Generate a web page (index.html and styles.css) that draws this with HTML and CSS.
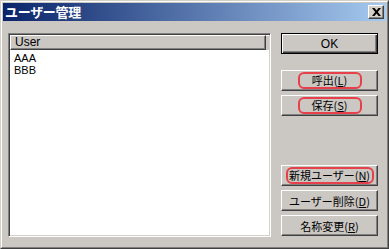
FILE: index.html
```html
<!DOCTYPE html>
<html lang="ja">
<head>
    <meta charset="UTF-8" />
    <title>ユーザー管理</title>
    <link rel="stylesheet" href="styles.css">
</head>
<body>
    <div class="window">
        <div class="frame">
            <div class="titlebar">
                <span class="title">ユーザー管理</span>
                <span class="close-btn">
                    <svg width="9" height="8" viewBox="0 0 9 8">
                        <path d="M0 0h2.5l2 2.5 2-2.5h2.5l-3.2 4 3.2 4h-2.5l-2-2.5-2 2.5h-2.5l3.2-4z" fill="#000"/>
                    </svg>
                </span>
            </div>

            <div class="content">
                <!-- ユーザー一覧 -->
                <div class="listbox">
                    <div class="list-header">
                        <div class="col">User</div>
                        <div class="col-rest"></div>
                    </div>
                    <div class="list-items">
                        <div class="item">AAA</div>
                        <div class="item">BBB</div>
                    </div>
                </div>

                <!-- ボタン -->
                <div class="buttons">
                    <div class="btn default">OK</div>
                    <div class="group top-group">
                        <div class="btn"><span class="mark">呼出(<u>L</u>)</span></div>
                        <div class="btn"><span class="mark">保存(<u>S</u>)</span></div>
                    </div>
                    <div class="group bottom-group">
                        <div class="btn"><span class="mark wide">新規ユーザー(<u>N</u>)</span></div>
                        <div class="btn">ユーザー削除(<u>D</u>)</div>
                        <div class="btn">名称変更(<u>R</u>)</div>
                    </div>
                </div>
            </div>
        </div>
    </div>
</body>
</html>
```

FILE: styles.css
```css
* {
    margin: 0;
    padding: 0;
    box-sizing: border-box;
}
body {
    font-family: "Liberation Sans", "Noto Sans CJK JP", sans-serif;
    font-size: 12px;
    color: #000;
    background: #cbc7c3;
}
.window {
    width: 389px;
    height: 249px;
    background: #cbc7c3;
    border: 1px solid;
    border-color: #d4d0c8 #404040 #404040 #d4d0c8;
}
.frame {
    height: 100%;
    border: 1px solid;
    border-color: #fff #808080 #808080 #fff;
    padding: 1px;
    display: flex;
    flex-direction: column;
}
/* タイトルバー */
.titlebar {
    height: 18px;
    display: flex;
    align-items: center;
    justify-content: space-between;
    padding: 0 2px 0 2px;
    background: linear-gradient(to right, #0a246a, #a6caf0);
}
.title {
    color: #fff;
    font-weight: bold;
    font-size: 13px;
    font-family: "Noto Sans CJK JP", sans-serif;
    line-height: 18px;
    letter-spacing: -0.3px;
}
.close-btn {
    width: 16px;
    height: 14px;
    display: flex;
    align-items: center;
    justify-content: center;
    background: #d4d0c8;
    border: 1px solid;
    border-color: #fff #404040 #404040 #fff;
    box-shadow: inset -1px -1px 0 #808080;
}
.content {
    flex: 1;
    display: flex;
    gap: 10px;
    padding: 12px 8px 0 5px;
}
/* リスト */
.listbox {
    width: 263px;
    height: 204px;
    background: #fff;
    border: 1px solid;
    border-color: #808080 #fff #fff #808080;
    box-shadow: inset 1px 1px 0 #404040, inset -1px -1px 0 #d4d0c8;
    padding: 1px;
}
.list-header {
    display: flex;
    height: 15px;
}
.col {
    width: 256px;
    padding-left: 4px;
    line-height: 13px;
    background: #cbc7c3;
    border: 1px solid;
    border-color: #fff #404040 #404040 #fff;
    box-shadow: inset -1px -1px 0 #808080;
}
.col-rest {
    flex: 1;
    background: #cbc7c3;
    border-top: 1px solid #fff;
}
.list-items {
    padding: 2px 0 0 4px;
}
.item {
    font-size: 11px;
    line-height: 12px;
}
/* ボタン */
.buttons {
    width: 97px;
    height: 203px;
    display: flex;
    flex-direction: column;
}
.group {
    display: flex;
    flex-direction: column;
    gap: 4px;
}
.top-group {
    margin-top: 16px;
}
.bottom-group {
    margin-top: auto;
}
.btn {
    height: 21px;
    display: flex;
    align-items: center;
    justify-content: center;
    white-space: nowrap;
    background: #cbc7c3;
    border: 1px solid;
    border-color: #fff #404040 #404040 #fff;
    box-shadow: inset -1px -1px 0 #808080;
    font-family: "Noto Sans CJK JP", sans-serif;
    font-size: 11px;
}
.btn.default {
    border: 1px solid #000;
    box-shadow: inset 1px 1px 0 #fff, inset -1px -1px 0 #404040, inset -2px -2px 0 #808080;
    font-family: "Liberation Sans", sans-serif;
    font-size: 12px;
}
.mark {
    display: inline-block;
    width: 64px;
    height: 17px;
    line-height: 13px;
    text-align: center;
    white-space: nowrap;
    border: 2px solid #e8404a;
    border-radius: 6px;
}
.mark.wide {
    width: 88px;
}
```
